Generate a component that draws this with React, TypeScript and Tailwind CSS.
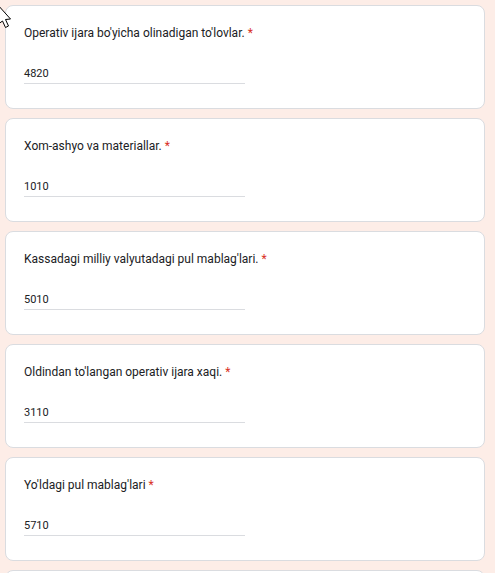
import React from "react";

const items = [
  { label: "Operativ ijara bo'yicha olinadigan to'lovlar.", value: "4820" },
  { label: "Xom-ashyo va materiallar.", value: "1010" },
  { label: "Kassadagi milliy valyutadagi pul mablag'lari.", value: "5010" },
  { label: "Oldindan to'langan operativ ijara xaqi.", value: "3110" },
  { label: "Yo'ldagi pul mablag'lari", value: "5710" },
  { label: "", value: "" },
];

function Cursor() {
  return (
    <svg
      className="absolute left-0 top-0 pointer-events-none"
      width="16"
      height="30"
      viewBox="0 0 16 30"
    >
      <polygon
        points="-3,4 10.5,19 5.5,19.5 8.5,26 5.5,27.5 2.5,21 -3,25"
        fill="#ffffff"
        stroke="#000000"
        strokeWidth="1"
        strokeLinejoin="miter"
      />
    </svg>
  );
}

export default function App() {
  return (
    <div
      className="relative w-[495px] h-[573px] overflow-hidden bg-[#fdede7]"
      style={{ fontFamily: "Roboto, 'Liberation Sans', sans-serif" }}
    >
      <div className="flex flex-col gap-[9px] pt-[5px] pl-[5px]">
        {items.map((it, i) => (
          <div
            key={i}
            className="w-[480px] h-[104px] shrink-0 bg-white border border-[#dadce0] rounded-[8px] px-[18px] pt-[19px]"
          >
            {it.label && (
              <>
                <div className="text-[12px] leading-[17px] text-[#202124]">
                  {it.label} <span className="text-[#d93025]">*</span>
                </div>
                <div className="mt-[24px] w-[221px] border-b border-[#dadce0] pb-[1px] text-[11px] leading-[16px] text-[#202124]">
                  {it.value}
                </div>
              </>
            )}
          </div>
        ))}
      </div>
      <Cursor />
    </div>
  );
}
